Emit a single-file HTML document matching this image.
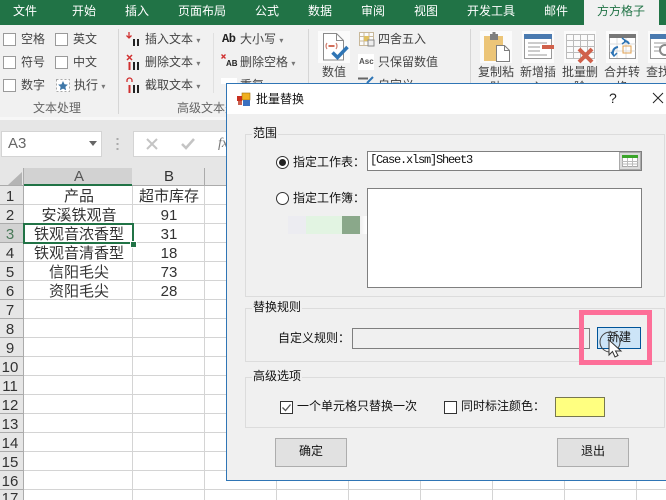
<!DOCTYPE html>
<html><head><meta charset="utf-8">
<style>
html,body{margin:0;padding:0}
#r{position:relative;width:666px;height:500px;overflow:hidden;background:#fff;font-family:"Liberation Sans","Noto Sans CJK SC",sans-serif}
#r div,#r span.t{position:absolute}
.t{white-space:nowrap;line-height:16px;font-size:12px;color:#444;transform:translateY(-8px)}
.c{transform:translate(-50%,-8px)}
.w{color:#fff}
.d{font-family:"Liberation Sans","WenQuanYi Zen Hei","Noto Sans CJK SC",sans-serif;color:#111;font-size:12px}
.s{font-size:15px;color:#333}
.n{font-size:15px;color:#333}
.cb{width:11px;height:11px;border:1px solid #9a9a9a;background:#fff}
.gb{border:1px solid #dcdcdc;box-sizing:border-box}
.gl{background:#f0f0f0;padding:0 1px}
.inp{box-sizing:border-box;border:1px solid #7f7f7f;background:#fff}
.btn{box-sizing:border-box;border:1px solid #adadad;background:#e1e1e1}
svg{position:absolute;overflow:visible}
</style></head><body><div id="r">

<!-- ribbon -->
<div style="left:0;top:0;width:666px;height:25px;background:#217346"></div>
<div style="left:584px;top:0;width:75px;height:25px;background:#f1f1f1"></div>
<span class="t w c" style="left:25px;top:11px">文件</span>
<span class="t w c" style="left:84px;top:11px">开始</span>
<span class="t w c" style="left:137px;top:11px">插入</span>
<span class="t w c" style="left:202px;top:11px">页面布局</span>
<span class="t w c" style="left:267px;top:11px">公式</span>
<span class="t w c" style="left:320px;top:11px">数据</span>
<span class="t w c" style="left:373px;top:11px">审阅</span>
<span class="t w c" style="left:426px;top:11px">视图</span>
<span class="t w c" style="left:491px;top:11px">开发工具</span>
<span class="t w c" style="left:556px;top:11px">邮件</span>
<span class="t c" style="left:621px;top:11px;color:#217346">方方格子</span>
<div style="left:0;top:25px;width:666px;height:92px;background:#f1f1f1"></div>
<div style="left:0;top:117px;width:666px;height:3px;background:#f7f7f7"></div>
<div style="left:118px;top:29px;width:1px;height:85px;background:#d6d6d6"></div>
<div style="left:213px;top:33px;width:1px;height:60px;background:#e0e0e0"></div>
<div style="left:308px;top:29px;width:1px;height:85px;background:#d6d6d6"></div>
<div style="left:470px;top:29px;width:1px;height:85px;background:#d6d6d6"></div>

<div class="cb" style="left:3px;top:33px"></div><span class="t" style="left:21px;top:39px">空格</span>
<div class="cb" style="left:55px;top:33px"></div><span class="t" style="left:73px;top:39px">英文</span>
<div class="cb" style="left:3px;top:56px"></div><span class="t" style="left:21px;top:62px">符号</span>
<div class="cb" style="left:55px;top:56px"></div><span class="t" style="left:73px;top:62px">中文</span>
<div class="cb" style="left:3px;top:79px"></div><span class="t" style="left:21px;top:85px">数字</span>
<svg style="left:56px;top:79px" width="14" height="13"><rect x=".5" y=".5" width="13" height="12" fill="#fff" stroke="#aaa" stroke-dasharray="2 2"/><path d="M7 2l1.500 3.200 3.400.4-2.500 2.300.7 3.400L7 9.600l-3.100 1.700.7-3.400L2.100 5.600l3.400-.4z" fill="#3f77a8"/></svg>
<span class="t" style="left:74px;top:85px">执行 <span style="font-size:8px;color:#777">▾</span></span>
<span class="t c" style="left:57px;top:108px;color:#666">文本处理</span>
<span class="t" style="left:177px;top:108px;color:#666">高级文本处理</span>

<svg style="left:125px;top:31px" width="16" height="16"><path d="M4 1v6M1.500 4.500L4 7l2.500-2.500" fill="none" stroke="#d03030" stroke-width="1.300"/><path d="M9 8v7M13 8v7" stroke="#222" stroke-width="2"/></svg>
<span class="t" style="left:145px;top:39px">插入文本 <span style="font-size:8px;color:#777">▾</span></span>
<svg style="left:125px;top:54px" width="16" height="17"><path d="M2 1l5 5M7 1L2 6" stroke="#d03030" stroke-width="1.500"/><path d="M4.500 8v8" stroke="#d03030" stroke-width="2"/><path d="M9 8v8M13 8v8" stroke="#222" stroke-width="2"/></svg>
<span class="t" style="left:145px;top:62px">删除文本 <span style="font-size:8px;color:#777">▾</span></span>
<svg style="left:125px;top:77px" width="16" height="17"><path d="M2 5V3.500a2.500 2.500 0 015 0V5" fill="none" stroke="#d03030" stroke-width="1.300"/><path d="M4.500 8v8" stroke="#d03030" stroke-width="2"/><path d="M9 8v8M13 8v8" stroke="#222" stroke-width="2"/></svg>
<span class="t" style="left:145px;top:85px">截取文本 <span style="font-size:8px;color:#777">▾</span></span>

<span class="t" style="left:222px;top:39px;font-family:'Liberation Mono',monospace;font-weight:bold;color:#222;letter-spacing:-.5px">Ab</span>
<span class="t" style="left:240px;top:39px">大小写 <span style="font-size:8px;color:#777">▾</span></span>
<svg style="left:221px;top:54px" width="6" height="6"><path d="M.5.500l4 4M4.500.500l-4 4" stroke="#d03030" stroke-width="1.400"/></svg>
<span class="t" style="left:226px;top:64px;font-family:'Liberation Sans';font-weight:bold;font-size:8px;color:#222">AB</span>
<span class="t" style="left:240px;top:62px">删除空格 <span style="font-size:8px;color:#777">▾</span></span>
<div style="left:221px;top:78px;width:16px;height:6px;background:#fff"></div>
<span class="t" style="left:240px;top:85px">重复</span>

<div style="left:318px;top:31px;width:32px;height:32px;background:#fbfbfb"></div>
<svg style="left:318px;top:31px" width="32" height="32"><path d="M5.500 2.500h13l7 7V29h-20z" fill="#fff" stroke="#8a8a8a"/><path d="M18.500 2.500v7h7" fill="none" stroke="#8a8a8a"/><path d="M9 12q-2 3 0 6M18 12q2 3 0 6" fill="none" stroke="#d08070" stroke-width="1.200"/><path d="M10.500 15h6" stroke="#c84a30" stroke-width="1.600"/><path d="M14.500 21.500l5 5L29.500 16" fill="none" stroke="#2f75b5" stroke-width="3.500"/></svg>
<span class="t c" style="left:334px;top:72px">数值</span>

<svg style="left:359px;top:32px" width="15" height="15"><rect width="15" height="14" fill="#fbfbfb"/><path d="M.500.500h14v13H.500zM.500 4.500h14M.500 9h14M5 .5v13M10 .5v13" fill="none" stroke="#c8b89a"/><rect x="5" y="4" width="5" height="5" fill="#e0c060"/><rect x="9" y="8" width="6" height="6" fill="#eee" stroke="#888"/></svg>
<span class="t" style="left:378px;top:39px;font-size:12px">四舍五入</span>
<div style="left:358px;top:54px;width:16px;height:16px;background:#fff"></div>
<span class="t" style="left:359px;top:62px;font-size:8px;font-weight:bold;color:#555">Asc</span>
<span class="t" style="left:378px;top:62px;font-size:12px">只保留数值</span>
<svg style="left:358px;top:76px" width="16" height="8"><path d="M0 2.500h10" stroke="#666" stroke-width="2"/><path d="M9 7l6-6" stroke="#2f75b5" stroke-width="2"/></svg>
<span class="t" style="left:378px;top:85px;font-size:12px">自定义</span>

<!-- big icons -->
<div style="left:480px;top:31px;width:32px;height:32px;background:#fbfbfb"></div>
<svg style="left:480px;top:31px" width="32" height="32"><rect x="4" y="5" width="19" height="25" fill="#ecc578"/><rect x="10" y="3" width="8" height="6" fill="#7f7f7f"/><rect x="12.500" y="1" width="3" height="3" fill="#7f7f7f"/><path d="M16.500 14.500h8l5 5v11h-13z" fill="#fff" stroke="#7f7f7f"/><path d="M24.500 14.500v5h5" fill="none" stroke="#7f7f7f"/></svg>
<div style="left:522px;top:31px;width:32px;height:32px;background:#fbfbfb"></div>
<svg style="left:522px;top:31px" width="32" height="32"><rect x="2.500" y="3.500" width="27" height="24" fill="#fff" stroke="#999"/><rect x="2" y="3" width="28" height="5" fill="#4a7ab0"/><path d="M6 12h19M6 16h12M6 20h12M6 24h19" stroke="#999"/><rect x="20" y="14" width="12" height="4" fill="#d0604a"/></svg>
<div style="left:564px;top:31px;width:32px;height:32px;background:#fbfbfb"></div>
<svg style="left:564px;top:31px" width="32" height="32"><path d="M2.500 3.500h28v24h-28zM2.500 9.500h28M2.500 15.500h28M2.500 21.500h28M9.500 3.500v24M16.500 3.500v24M23.500 3.500v24" fill="none" stroke="#bbb"/><path d="M15 18l13 13M28 18L15 31" stroke="#d0604a" stroke-width="4"/></svg>
<div style="left:606px;top:31px;width:32px;height:32px;background:#fbfbfb"></div>
<svg style="left:606px;top:31px" width="32" height="32"><rect x="3.500" y="3.500" width="26" height="24" fill="#fff" stroke="#999"/><rect x="3" y="3" width="27" height="4" fill="#777"/><path d="M3.500 13h26M3.500 20h26M11 7v20M20 7v20" stroke="#ddd"/><rect x="17" y="15" width="8" height="7" fill="none" stroke="#e0a050"/><path d="M7 24q-1-7 5-8M18 10q4 0 5 3" fill="none" stroke="#2f75b5" stroke-width="2"/><path d="M5 21l3 4 3-3M16 7l4 3-4 3" fill="none" stroke="#2f75b5" stroke-width="1.500"/></svg>
<div style="left:648px;top:31px;width:18px;height:32px;background:#fbfbfb"></div>
<svg style="left:648px;top:31px" width="18" height="32"><rect x="2.500" y="3.500" width="20" height="24" fill="#fff" stroke="#999"/><rect x="2" y="3" width="18" height="5" fill="#4a7ab0"/><path d="M6 12h12M6 16h8M6 20h8" stroke="#999"/><circle cx="17" cy="19" r="5" fill="#fff" stroke="#888" stroke-width="2"/></svg>
<span class="t" style="left:478px;top:72px">复制粘</span>
<span class="t" style="left:520px;top:72px">新增插</span>
<span class="t" style="left:562px;top:72px">批量删</span>
<span class="t" style="left:604px;top:72px">合并转</span>
<span class="t" style="left:646px;top:72px">查找</span>
<span class="t" style="left:490px;top:87px">贴</span>
<span class="t" style="left:532px;top:87px">入</span>
<span class="t" style="left:574px;top:87px">除</span>
<span class="t" style="left:616px;top:87px">换</span>

<!-- formula bar -->
<div style="left:0;top:120px;width:666px;height:48px;background:#e6e6e6"></div>
<div style="left:1px;top:131px;width:101px;height:26px;background:#fff;border:1px solid #d4d4d4;box-sizing:border-box"></div>
<span class="t" style="left:8px;top:144px;font-size:15px;color:#666">A3</span>
<svg style="left:89px;top:141px" width="10" height="6"><path d="M0 0h8L4 5z" fill="#666"/></svg>
<svg style="left:116px;top:138px" width="4" height="14"><path d="M1.500 0v2M1.500 5v2M1.500 10v2" stroke="#aaa" stroke-width="2"/></svg>
<div style="left:133px;top:131px;width:533px;height:26px;background:#fff;border:1px solid #d4d4d4;box-sizing:border-box"></div>
<svg style="left:146px;top:138px" width="12" height="12"><path d="M1 1l10 10M11 1L1 11" stroke="#c4c4c4" stroke-width="2"/></svg>
<svg style="left:181px;top:138px" width="14" height="12"><path d="M1 6l4 4 8-9" fill="none" stroke="#c4c4c4" stroke-width="2.500"/></svg>
<span class="t" style="left:218px;top:144px;font-family:'Liberation Serif';font-style:italic;font-size:14px;color:#777">fx</span>

<!-- sheet -->
<div style="left:0;top:168px;width:666px;height:18px;background:#e6e6e6;border-bottom:1px solid #ababab;box-sizing:border-box"></div>
<div style="left:0;top:186px;width:24px;height:314px;background:#e6e6e6"></div>
<svg style="left:8px;top:172px" width="14" height="13"><path d="M14 0v13H0z" fill="#b4b4b4"/></svg>
<div style="left:24px;top:168px;width:108px;height:18px;background:#d2d2d2;border-bottom:2px solid #217346;box-sizing:border-box"></div>
<div style="left:0;top:224px;width:24px;height:19px;background:#d2d2d2"></div>
<div style="left:23px;top:168px;width:1px;height:332px;background:#ababab"></div>
<div style="left:204px;top:168px;width:1px;height:18px;background:#ababab"></div>

<svg style="left:0;top:0" width="666" height="500">
<path d="M24 204.500h642M24 223.500h642M24 242.500h642M24 261.500h642M24 280.500h642M24 299.500h642M24 318.500h642M24 337.500h642M24 356.500h642M24 375.500h642M24 394.500h642M24 413.500h642M24 432.500h642M24 451.500h642M24 470.500h642M24 489.500h642M132.500 186v314M204.500 186v314M276.500 186v314M348.500 186v314M420.500 186v314M492.500 186v314M564.500 186v314M636.500 186v314" stroke="#d4d4d4" fill="none"/>
<path d="M0 204.500h23M0 223.500h23M0 242.500h23M0 261.500h23M0 280.500h23M0 299.500h23M0 318.500h23M0 337.500h23M0 356.500h23M0 375.500h23M0 394.500h23M0 413.500h23M0 432.500h23M0 451.500h23M0 470.500h23M0 489.500h23" stroke="#ababab" fill="none"/>
</svg>

<span class="t n c" style="left:79px;top:177px;color:#555">A</span>
<span class="t n c" style="left:169px;top:177px">B</span>
<span class="t n c" style="left:10px;top:197px">1</span>
<span class="t n c" style="left:10px;top:216px">2</span>
<span class="t n c" style="left:10px;top:235px;color:#4a7a5a">3</span>
<span class="t n c" style="left:10px;top:254px">4</span>
<span class="t n c" style="left:10px;top:273px">5</span>
<span class="t n c" style="left:10px;top:292px">6</span>
<span class="t n c" style="left:10px;top:311px">7</span>
<span class="t n c" style="left:10px;top:330px">8</span>
<span class="t n c" style="left:10px;top:349px">9</span>
<span class="t n c" style="left:10px;top:368px">10</span>
<span class="t n c" style="left:10px;top:387px">11</span>
<span class="t n c" style="left:10px;top:406px">12</span>
<span class="t n c" style="left:10px;top:425px">13</span>
<span class="t n c" style="left:10px;top:444px">14</span>
<span class="t n c" style="left:10px;top:463px">15</span>
<span class="t n c" style="left:10px;top:482px">16</span>
<span class="t n c" style="left:10px;top:499px">17</span>

<span class="t s c" style="left:79px;top:197px">产品</span>
<span class="t s c" style="left:169px;top:197px">超市库存</span>
<span class="t s c" style="left:79px;top:216px">安溪铁观音</span>
<span class="t n c" style="left:169px;top:216px">91</span>
<span class="t s c" style="left:79px;top:235px">铁观音浓香型</span>
<span class="t n c" style="left:169px;top:235px">31</span>
<span class="t s c" style="left:79px;top:254px">铁观音清香型</span>
<span class="t n c" style="left:169px;top:254px">18</span>
<span class="t s c" style="left:79px;top:273px">信阳毛尖</span>
<span class="t n c" style="left:169px;top:273px">73</span>
<span class="t s c" style="left:79px;top:292px">资阳毛尖</span>
<span class="t n c" style="left:169px;top:292px">28</span>
<div style="left:23px;top:223px;width:111px;height:21px;box-sizing:border-box;border:2px solid #217346"></div>
<div style="left:130px;top:241px;width:5px;height:5px;background:#217346;border:1px solid #fff"></div>

<!-- dialog -->
<div style="left:226px;top:83px;width:440px;height:398px;background:#f0f0f0;border:1px solid #2f75b5;border-right:0;box-sizing:border-box"></div>
<div style="left:227px;top:84px;width:439px;height:30px;background:#fff"></div>
<svg style="left:237px;top:93px" width="13" height="13"><rect x="5" y="0" width="8" height="7" fill="#f0b020" stroke="#a07010" stroke-width=".6"/><rect x="0" y="3" width="5" height="5" fill="#c83020"/><rect x="6" y="7" width="7" height="6" fill="#3a70c0"/><rect x="1" y="8" width="4" height="4" fill="#c86050"/></svg>
<span class="t d" style="left:256px;top:99px">批量替换</span>
<span class="t" style="left:609px;top:98px;font-size:14px;color:#222">?</span>
<svg style="left:652px;top:92px" width="12" height="12"><path d="M1 1l10 10M11 1L1 11" stroke="#222" stroke-width="1"/></svg>

<div class="gb" style="left:245px;top:134px;width:420px;height:163px"></div>
<span class="t d gl" style="left:252px;top:133px">范围</span>
<svg style="left:275px;top:155px" width="14" height="14"><circle cx="7.500" cy="7.500" r="6" fill="#fff" stroke="#333"/><circle cx="7.500" cy="7.500" r="3.500" fill="#222"/></svg>
<span class="t d" style="left:293px;top:162px">指定工作表：</span>
<div class="inp" style="left:367px;top:151px;width:275px;height:20px"></div>
<span class="t" style="left:370px;top:160px;font-family:'Liberation Mono',monospace;font-size:12px;color:#111;letter-spacing:-1.200px">[Case.xlsm]Sheet3</span>
<div style="left:619px;top:152px;width:22px;height:18px;background:#dcdcdc;border:1px solid #aaa;box-sizing:border-box"></div>
<svg style="left:622px;top:155px" width="16" height="12"><rect x=".5" y=".5" width="15" height="11" fill="#fff" stroke="#aaa"/><rect width="16" height="3" fill="#3aa52a"/><path d="M0 6.500h16M0 9h16M5.500 3v9M10.500 3v9" stroke="#bbb"/></svg>
<svg style="left:275px;top:191px" width="14" height="14"><circle cx="7.500" cy="7.500" r="6" fill="#fff" stroke="#333"/></svg>
<span class="t d" style="left:293px;top:198px">指定工作簿：</span>
<div class="inp" style="left:367px;top:188px;width:275px;height:100px"></div>
<div style="left:288px;top:216px;width:18px;height:18px;background:#ececf1"></div>
<div style="left:306px;top:216px;width:36px;height:18px;background:#e2f4e2"></div>
<div style="left:342px;top:216px;width:18px;height:18px;background:#8aa88a"></div>
<div style="left:360px;top:216px;width:7px;height:18px;background:linear-gradient(90deg,#f0f0f0,#fff)"></div>

<div class="gb" style="left:245px;top:308px;width:420px;height:54px"></div>
<span class="t d gl" style="left:252px;top:307px">替换规则</span>
<span class="t d" style="left:278px;top:338px">自定义规则：</span>
<div class="inp" style="left:352px;top:328px;width:238px;height:21px;background:#f0f0f0"></div>
<div style="left:579px;top:310px;width:73px;height:55px;box-sizing:border-box;border:5px solid #fd6e98"></div>
<div style="left:597px;top:327px;width:44px;height:22px;box-sizing:border-box;background:#cce4f7;border:1px solid #005499"></div>
<span class="t d" style="left:607px;top:337px">新建</span>
<svg style="left:600px;top:329px" width="24" height="32"><circle cx="10" cy="13" r="10" fill="none" stroke="#444" stroke-width="1"/><path d="M9 11v15l3.500-3.500 2.500 5.500 3-1.500-2.500-4.500H21z" fill="#fff" stroke="#333" stroke-width="1"/></svg>

<div class="gb" style="left:245px;top:377px;width:420px;height:51px"></div>
<span class="t d gl" style="left:252px;top:376px">高级选项</span>
<svg style="left:280px;top:401px" width="13" height="13"><rect x=".5" y=".5" width="12" height="12" fill="#fff" stroke="#333"/><path d="M2.500 6.500l3 3 5-6" fill="none" stroke="#555" stroke-width="1.300"/></svg>
<span class="t d" style="left:297px;top:406px">一个单元格只替换一次</span>
<div style="left:444px;top:401px;width:13px;height:13px;box-sizing:border-box;background:#fff;border:1px solid #333"></div>
<span class="t d" style="left:461px;top:406px">同时标注颜色：</span>
<div style="left:555px;top:397px;width:50px;height:20px;box-sizing:border-box;background:#ffff80;border:1px solid #77774f"></div>

<div class="btn" style="left:275px;top:438px;width:72px;height:29px"></div>
<span class="t d c" style="left:311px;top:451px">确定</span>
<div class="btn" style="left:557px;top:438px;width:72px;height:29px"></div>
<span class="t d c" style="left:593px;top:451px">退出</span>

</div></body></html>
